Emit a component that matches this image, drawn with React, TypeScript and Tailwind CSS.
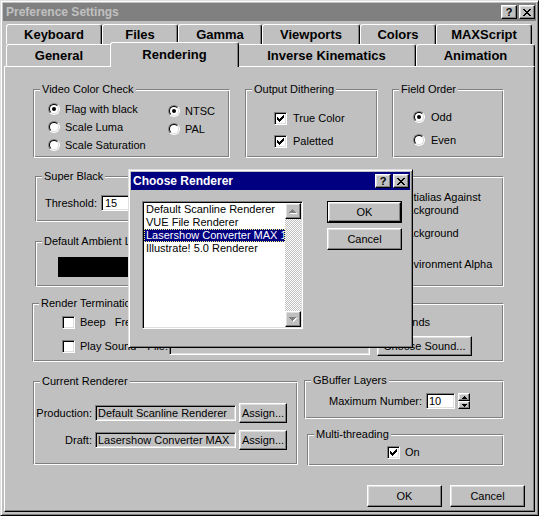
import React from "react";

const raised =
  "bg-[#c0c0c0] border border-t-white border-l-white border-r-black border-b-black shadow-[inset_-1px_-1px_0_#808080,inset_1px_1px_0_#dfdfdf]";
const sunken =
  "border border-t-[#808080] border-l-[#808080] border-r-white border-b-white shadow-[inset_1px_1px_0_#000,inset_-1px_-1px_0_#dfdfdf]";

function Group({
  label,
  className,
  children,
}: {
  label: string;
  className: string;
  children?: React.ReactNode;
}) {
  return (
    <div
      className={`relative border border-t-[#808080] border-l-[#808080] border-r-white border-b-white shadow-[inset_1px_1px_0_#fff,inset_-1px_-1px_0_#808080] ${className}`}
    >
      <span className="absolute -top-[8px] left-[6px] bg-[#c0c0c0] px-[2px] leading-[14px] whitespace-nowrap">
        {label}
      </span>
      {children}
    </div>
  );
}

function RadioDot({ checked }: { checked?: boolean }) {
  return (
    <span className="w-[12px] h-[12px] shrink-0 rounded-full border border-t-[#808080] border-l-[#808080] border-r-white border-b-white flex">
      <span className="flex-1 rounded-full border border-t-black border-l-black border-r-[#dfdfdf] border-b-[#dfdfdf] bg-white flex items-center justify-center">
        {checked && <span className="w-[4px] h-[4px] rounded-full bg-black" />}
      </span>
    </span>
  );
}

function Radio({ label, checked, gap }: { label: string; checked?: boolean; gap: string }) {
  return (
    <div className={`flex items-center h-[18px] ${gap}`}>
      <RadioDot checked={checked} />
      <span className="whitespace-nowrap">{label}</span>
    </div>
  );
}

function CheckBox({ checked }: { checked?: boolean }) {
  return (
    <span className={`w-[13px] h-[13px] shrink-0 bg-white flex items-center justify-center ${sunken}`}>
      {checked && (
        <svg width="7" height="7" viewBox="0 0 7 7" shapeRendering="crispEdges">
          <path
            d="M6 0h1v1h-1z M5 1h2v1h-2z M0 2h1v1h-1z M4 2h3v1h-3z M0 3h2v1h-2z M3 3h3v1h-3z M0 4h5v1h-5z M1 5h3v1h-3z M2 6h1v1h-1z"
            fill="#000"
          />
        </svg>
      )}
    </span>
  );
}

function Button({ label, className }: { label: string; className: string }) {
  return (
    <div className={`flex items-center justify-center ${raised} ${className}`}>
      <span>{label}</span>
    </div>
  );
}

function CloseGlyph() {
  return (
    <svg width="8" height="7" viewBox="0 0 8 7" shapeRendering="crispEdges">
      <path
        d="M0 0h2v1h-2z M6 0h2v1h-2z M1 1h2v1h-2z M5 1h2v1h-2z M2 2h4v1h-4z M3 3h2v1h-2z M2 4h4v1h-4z M1 5h2v1h-2z M5 5h2v1h-2z M0 6h2v1h-2z M6 6h2v1h-2z"
        fill="#000"
      />
    </svg>
  );
}

function TitleButtons() {
  return (
    <div className="flex gap-[2px]">
      <div className={`w-[16px] h-[14px] flex items-center justify-center ${raised}`}>
        <span className="font-bold text-[11px] leading-[11px] text-black">?</span>
      </div>
      <div className={`w-[16px] h-[14px] flex items-center justify-center ${raised}`}>
        <CloseGlyph />
      </div>
    </div>
  );
}

function Tab({ label, className }: { label: string; className: string }) {
  return (
    <div
      className={`flex items-center justify-center font-bold text-[13px] border-x border-t border-t-white border-l-white border-r-black rounded-t-[3px] shadow-[inset_-1px_0_0_#808080] bg-[#c0c0c0] ${className}`}
    >
      {label}
    </div>
  );
}

function DisabledArrow({ up }: { up?: boolean }) {
  const d = up
    ? "M3 0h1v1h1v1h1v1h1v1H0V3h1V2h1V1h1z"
    : "M0 0h7v1h-1v1h-1v1h-1v1H3V3H2V2H1V1H0z";
  return (
    <svg width="8" height="5" viewBox="0 0 8 5" shapeRendering="crispEdges">
      <path d={d} fill="#fff" transform="translate(1,1)" />
      <path d={d} fill="#808080" />
    </svg>
  );
}

function SmallArrow({ up }: { up?: boolean }) {
  const d = up ? "M2 0h1v1h1v1h1v1H0V2h1V1h1z" : "M0 0h5v1H4v1H3v1H2V2H1V1H0z";
  return (
    <svg width="5" height="3" viewBox="0 0 5 3" shapeRendering="crispEdges">
      <path d={d} fill="#000" />
    </svg>
  );
}

export default function App() {
  return (
    <div className="w-[539px] h-[516px] relative overflow-hidden bg-[#c0c0c0] text-black text-[11px] leading-[14px] font-['Liberation_Sans',Arial,sans-serif] border border-t-[#dfdfdf] border-l-[#dfdfdf] border-r-black border-b-black shadow-[inset_1px_1px_0_#fff,inset_-1px_-1px_0_#808080] p-[2px]">
      {/* Title bar */}
      <div className="h-[18px] bg-[#808080] flex items-center pl-[3px] pr-[1px]">
        <span className="flex-1 font-bold text-[12px] text-[#c0c0c0]">Preference Settings</span>
        <TitleButtons />
      </div>

      {/* Tabs */}
      <div className="mt-[3px] ml-[3px] flex h-[20px]">
        <Tab label="Keyboard" className="w-[96px] h-[20px]" />
        <Tab label="Files" className="w-[76px] h-[20px]" />
        <Tab label="Gamma" className="w-[84px] h-[20px]" />
        <Tab label="Viewports" className="w-[98px] h-[20px]" />
        <Tab label="Colors" className="w-[76px] h-[20px]" />
        <Tab label="MAXScript" className="w-[96px] h-[20px]" />
      </div>
      <div className="ml-[3px] flex items-end h-[22px]">
        <Tab label="General" className="w-[106px] h-[22px]" />
        <Tab label="Rendering" className="w-[129px] h-[25px] -mx-[2px] -mb-[1px] relative z-10 pb-[1px]" />
        <Tab label="Inverse Kinematics" className="w-[179px] h-[22px]" />
        <Tab label="Animation" className="w-[119px] h-[22px]" />
      </div>

      {/* Panel */}
      <div className="ml-[1px] w-[531px] h-[446px] flex flex-col border border-t-white border-l-white border-r-black border-b-black shadow-[inset_-1px_-1px_0_#808080]">
        {/* Row 1 */}
        <div className="flex items-start mt-[22px] ml-[28px]">
          <Group label="Video Color Check" className="w-[197px] h-[69px] pt-[10px] pl-[14px] flex">
            <div className="w-[120px] flex flex-col">
              <Radio label="Flag with black" checked gap="gap-[5px]" />
              <Radio label="Scale Luma" gap="gap-[5px]" />
              <Radio label="Scale Saturation" gap="gap-[5px]" />
            </div>
            <div className="flex flex-col pt-[2px]">
              <Radio label="NTSC" checked gap="gap-[5px]" />
              <Radio label="PAL" gap="gap-[5px]" />
            </div>
          </Group>
          <Group label="Output Dithering" className="ml-[15px] w-[133px] h-[69px] pt-[19px] pl-[28px] flex flex-col gap-[5px]">
            <div className="flex items-center h-[18px] gap-[6px]">
              <CheckBox checked />
              <span>True Color</span>
            </div>
            <div className="flex items-center h-[18px] gap-[6px]">
              <CheckBox checked />
              <span>Paletted</span>
            </div>
          </Group>
          <Group label="Field Order" className="ml-[14px] w-[112px] h-[69px] pt-[18px] pl-[20px] flex flex-col gap-[5px]">
            <Radio label="Odd" checked gap="gap-[6px]" />
            <Radio label="Even" gap="gap-[6px]" />
          </Group>
        </div>

        {/* Row 2 */}
        <div className="flex items-start mt-[18px] ml-[30px]">
          <div className="w-[255px] flex flex-col gap-[19px]">
            <Group label="Super Black" className="h-[46px] pt-[18px] pl-[9px]">
              <div className="flex items-center h-[16px]">
                <span>Threshold:</span>
                <span className={`ml-[4px] w-[44px] h-[16px] bg-white pl-[3px] flex items-center ${sunken}`}>15</span>
              </div>
            </Group>
            <Group label="Default Ambient Light" className="h-[46px] pt-[15px] pl-[22px]">
              <div className="w-[110px] h-[20px] bg-black" />
            </Group>
          </div>
          <Group label="Antialiasing" className="ml-[15px] w-[199px] h-[111px] pt-[14px] pl-[76px] flex flex-col">
            <div className="flex items-start gap-[5px]">
              <span className="mt-[1px]">
                <CheckBox checked />
              </span>
              <span className="w-[100px] leading-[13px]">Antialias Against Background</span>
            </div>
            <div className="flex items-center gap-[5px] mt-[9px] h-[14px]">
              <CheckBox />
              <span>Background</span>
            </div>
            <div className="flex items-center gap-[5px] mt-[17px] h-[14px]">
              <CheckBox />
              <span>Environment Alpha</span>
            </div>
          </Group>
        </div>

        {/* Row 3 */}
        <Group label="Render Termination Alert" className="mt-[16px] ml-[27px] w-[472px] h-[59px] pt-[10px] pl-[29px] flex flex-col">
          <div className="w-[368px] flex items-center h-[16px]">
            <CheckBox />
            <span className="ml-[5px]">Beep</span>
            <span className="ml-[9px]">Frequency:</span>
            <span className="ml-auto">Seconds</span>
          </div>
          <div className="flex items-center h-[20px] mt-[6px]">
            <CheckBox />
            <span className="ml-[5px]">Play Sound</span>
            <span className="ml-[11px]">File:</span>
            <span className={`ml-[1px] w-[201px] h-[17px] ${sunken}`} />
            <Button label="Choose Sound..." className="ml-[7px] w-[95px] h-[20px]" />
          </div>
        </Group>

        {/* Row 4 */}
        <div className="flex items-start mt-[18px] ml-[28px]">
          <Group label="Current Renderer" className="mt-[1px] w-[265px] h-[84px] pt-[21px] flex flex-col gap-[7px]">
            <div className="flex items-center h-[20px]">
              <span className="w-[59px] text-right pr-[1px]">Production:</span>
              <span className={`ml-[2px] w-[141px] h-[16px] pl-[2px] flex items-center whitespace-nowrap overflow-hidden ${sunken}`}>
                Default Scanline Renderer
              </span>
              <Button label="Assign..." className="ml-[3px] w-[48px] h-[20px]" />
            </div>
            <div className="flex items-center h-[20px]">
              <span className="w-[59px] text-right pr-[1px]">Draft:</span>
              <span className={`ml-[2px] w-[141px] h-[16px] pl-[2px] flex items-center whitespace-nowrap overflow-hidden ${sunken}`}>
                Lasershow Converter MAX
              </span>
              <Button label="Assign..." className="ml-[3px] w-[48px] h-[20px]" />
            </div>
          </Group>
          <div className="ml-[6px] w-[200px] flex flex-col">
            <Group label="GBuffer Layers" className="w-[200px] h-[39px] pt-[12px] pl-[14px]">
              <div className="flex items-center h-[16px]">
                <span className="w-[103px] text-right">Maximum Number:</span>
                <span className={`ml-[4px] w-[29px] h-[16px] bg-white pl-[2px] flex items-center ${sunken}`}>10</span>
                <div className="ml-[3px] w-[12px] h-[16px] flex flex-col">
                  <div className={`h-[8px] flex items-center justify-center ${raised}`}>
                    <SmallArrow up />
                  </div>
                  <div className={`h-[8px] flex items-center justify-center ${raised}`}>
                    <SmallArrow />
                  </div>
                </div>
              </div>
            </Group>
            <Group label="Multi-threading" className="ml-[3px] mt-[15px] w-[197px] h-[32px] pt-[10px] pl-[79px]">
              <div className="flex items-center gap-[5px] h-[14px]">
                <CheckBox checked />
                <span>On</span>
              </div>
            </Group>
          </div>
        </div>

        {/* Row 5 */}
        <div className="flex mt-[19px] ml-[362px] gap-[8px]">
          <Button label="OK" className="w-[75px] h-[22px]" />
          <Button label="Cancel" className="w-[75px] h-[22px]" />
        </div>
      </div>

      {/* Choose Renderer dialog */}
      <div className="absolute left-[127px] top-[168px] z-20 w-[285px] h-[179px] bg-[#c0c0c0] p-[2px] border border-t-[#dfdfdf] border-l-[#dfdfdf] border-r-black border-b-black shadow-[inset_1px_1px_0_#fff,inset_-1px_-1px_0_#808080]">
        <div className="h-[18px] bg-[#000080] flex items-center pl-[2px] pr-[1px]">
          <span className="flex-1 font-bold text-[12px] text-white">Choose Renderer</span>
          <TitleButtons />
        </div>
        <div className="flex pt-[11px] pl-[11px]">
          <div className={`w-[161px] h-[128px] bg-white flex ${sunken} p-[1px]`}>
            <div className="flex-1 flex flex-col overflow-hidden leading-[13px]">
              <div className="h-[13px] pl-[2px] whitespace-nowrap">Default Scanline Renderer</div>
              <div className="h-[13px] pl-[2px] whitespace-nowrap">VUE File Renderer</div>
              <div className="h-[13px] pl-[1px] whitespace-nowrap bg-[#000080] text-white border border-dotted border-[#ffff80] leading-[11px] overflow-hidden">
                Lasershow Converter MAX 1.0
              </div>
              <div className="h-[13px] pl-[2px] whitespace-nowrap">Illustrate! 5.0 Renderer</div>
            </div>
            <div className="w-[16px] flex flex-col bg-[repeating-conic-gradient(#c0c0c0_0%_25%,#ffffff_0%_50%)] bg-[length:2px_2px]">
              <div className={`h-[16px] flex items-center justify-center ${raised}`}>
                <DisabledArrow up />
              </div>
              <div className="flex-1" />
              <div className={`h-[16px] flex items-center justify-center ${raised}`}>
                <DisabledArrow />
              </div>
            </div>
          </div>
          <div className="ml-[24px] w-[75px] flex flex-col gap-[5px]">
            <div className="h-[22px] border border-black flex">
              <div className={`flex-1 flex items-center justify-center ${raised}`}>OK</div>
            </div>
            <Button label="Cancel" className="h-[22px]" />
          </div>
        </div>
      </div>
    </div>
  );
}
